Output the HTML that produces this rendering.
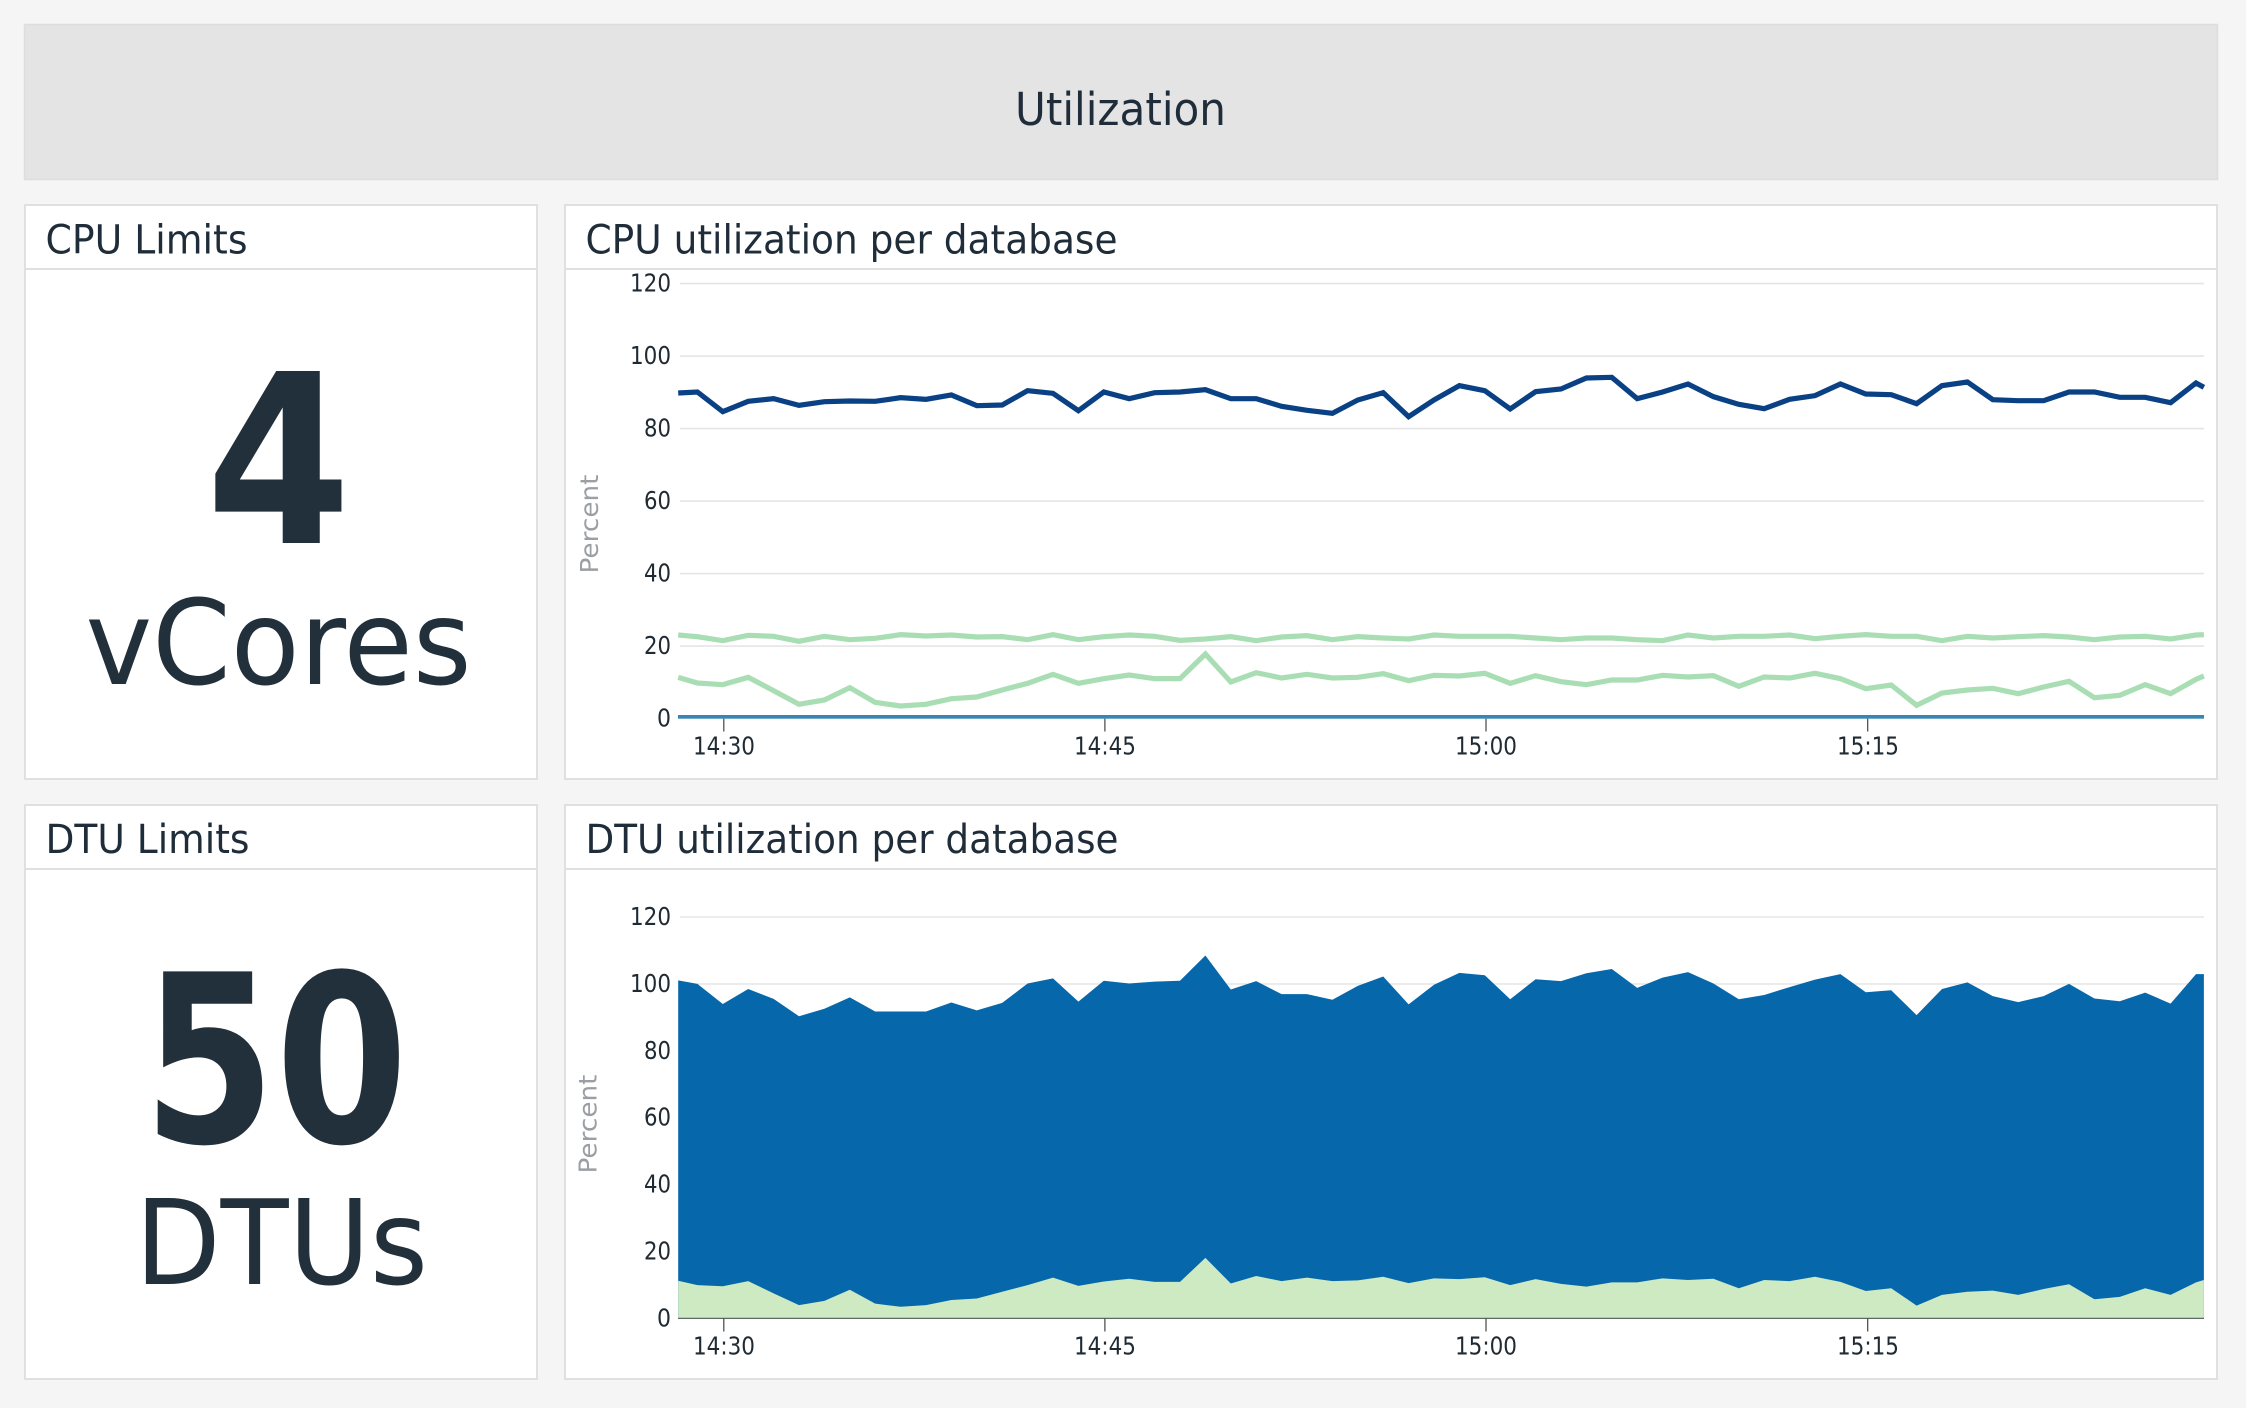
<!DOCTYPE html>
<html lang="en"><head><meta charset="utf-8"><title>Utilization</title>
<style>
html,body{margin:0;padding:0;background:#f5f5f5;width:2246px;height:1408px;overflow:hidden}
svg{display:block}
text{font-family:"DejaVu Sans","Liberation Sans",sans-serif;fill:#1f2d3a}
.t{font-size:40px}
.a{font-size:24.5px;fill:#1f2a33;text-anchor:end}
.x{font-size:24.5px;fill:#1f2a33;text-anchor:middle}
.p{font-size:25px;fill:#9b9fa3;text-anchor:middle}
.big{fill:#22303b}
.card{fill:#fff;stroke:#e0e0e0;stroke-width:2}
.div{stroke:#e0e0e0;stroke-width:2}
.g{stroke:#e5e5e5;stroke-width:1.6}
.tick{stroke:#444;stroke-width:1.2}
polyline{fill:none;vector-effect:non-scaling-stroke;stroke-linejoin:miter}
</style></head><body>
<svg width="2246" height="1408" viewBox="0 0 2246 1408" xmlns="http://www.w3.org/2000/svg">
<rect width="2246" height="1408" fill="#f5f5f5"/>
<rect x="24.5" y="24.5" width="2193" height="155" fill="#e4e4e4" stroke="#dedede" stroke-width="1.5"/>
<text x="1015" y="125" font-size="45" textLength="211" lengthAdjust="spacingAndGlyphs">Utilization</text>

<rect class="card" x="25" y="205" width="512" height="574"/>
<rect class="card" x="565" y="205" width="1652" height="574"/>
<rect class="card" x="25" y="805" width="512" height="574"/>
<rect class="card" x="565" y="805" width="1652" height="574"/>
<line class="div" x1="25" x2="537" y1="269" y2="269"/>
<line class="div" x1="565" x2="2217" y1="269" y2="269"/>
<line class="div" x1="25" x2="537" y1="869" y2="869"/>
<line class="div" x1="565" x2="2217" y1="869" y2="869"/>

<text class="t" x="45.5" y="253.5" textLength="202" lengthAdjust="spacingAndGlyphs">CPU Limits</text>
<text class="t" x="585.5" y="253.5" textLength="532" lengthAdjust="spacingAndGlyphs">CPU utilization per database</text>
<text class="t" x="45.5" y="853" textLength="204" lengthAdjust="spacingAndGlyphs">DTU Limits</text>
<text class="t" x="585.5" y="853" textLength="533" lengthAdjust="spacingAndGlyphs">DTU utilization per database</text>

<text class="big" x="206" y="543" font-size="236" font-weight="700" textLength="145" lengthAdjust="spacingAndGlyphs">4</text>
<text class="big" x="85.5" y="684" font-size="118" textLength="386" lengthAdjust="spacingAndGlyphs">vCores</text>
<text class="big" x="143" y="1142" font-size="234" font-weight="700" textLength="265" lengthAdjust="spacingAndGlyphs">50</text>
<text class="big" x="135" y="1284" font-size="118" textLength="293" lengthAdjust="spacingAndGlyphs">DTUs</text>

<!-- CPU chart -->
<g>
<line class="g" x1="680" x2="2204" y1="283.6" y2="283.6"/>
<line class="g" x1="680" x2="2204" y1="356.1" y2="356.1"/>
<line class="g" x1="680" x2="2204" y1="428.6" y2="428.6"/>
<line class="g" x1="680" x2="2204" y1="501.1" y2="501.1"/>
<line class="g" x1="680" x2="2204" y1="573.6" y2="573.6"/>
<line class="g" x1="680" x2="2204" y1="646.1" y2="646.1"/>
</g>
<g transform="matrix(25.4,0,0,0.33333,722.8,260)">
<polyline stroke="#0a4185" stroke-width="5.2" points="-1.756,399 -1,396 0,455 1,424 2,416 3,436 4,425 5,423 6,424 7,413 8,418 9,405 10,437 11,435 12,392 13,400 14,452 15,396 16,416 17,398 18,396 19,389 20,416 21,416 22,439 23,451 24,460 25,420 26,398 27,470 28,420 29,377 30,392 31,447 32,395 33,387 34,354 35,352 36,416 37,396 38,372 39,410 40,433 41,446 42,418 43,407 44,372 45,402 46,404 47,431 48,377 49,366 50,419 51,422 52,422 53,396 54,396 55,412 56,412 57,428 58,369 58.31,382"/>
<polyline stroke="#a9deb4" stroke-width="5.2" points="-1.756,1125 -1,1130 0,1142 1,1126 2,1129 3,1144 4,1129 5,1139 6,1135 7,1124 8,1128 9,1125 10,1131 11,1130 12,1139 13,1124 14,1139 15,1130 16,1125 17,1129 18,1141 19,1137 20,1130 21,1142 22,1131 23,1127 24,1139 25,1130 26,1134 27,1137 28,1125 29,1129 30,1129 31,1129 32,1134 33,1139 34,1134 35,1134 36,1139 37,1142 38,1125 39,1134 40,1129 41,1129 42,1125 43,1136 44,1129 45,1124 46,1129 47,1129 48,1142 49,1129 50,1134 51,1130 52,1127 53,1131 54,1139 55,1131 56,1129 57,1137 58,1125 58.31,1124"/>
<polyline stroke="#a9deb4" stroke-width="5.2" points="-1.756,1252 -1,1269 0,1274 1,1252 2,1292 3,1333 4,1320 5,1283 6,1327 7,1338 8,1333 9,1316 10,1311 11,1290 12,1270 13,1243 14,1270 15,1256 16,1245 17,1256 18,1256 19,1182 20,1266 21,1238 22,1254 23,1243 24,1254 25,1252 26,1241 27,1262 28,1246 29,1248 30,1240 31,1270 32,1247 33,1265 34,1274 35,1260 36,1260 37,1246 38,1251 39,1247 40,1279 41,1251 42,1254 43,1240 44,1256 45,1286 46,1275 47,1336 48,1299 49,1290 50,1285 51,1301 52,1281 53,1264 54,1313 55,1306 56,1274 57,1301 58,1258 58.31,1248"/>
</g>
<rect x="678" y="715" width="1526" height="3.7" fill="#3a86b3"/>
<g>
<line class="tick" x1="723.8" x2="723.8" y1="718.7" y2="731.5"/>
<line class="tick" x1="1104.9" x2="1104.9" y1="718.7" y2="731.5"/>
<line class="tick" x1="1486" x2="1486" y1="718.7" y2="731.5"/>
<line class="tick" x1="1867.7" x2="1867.7" y1="718.7" y2="731.5"/>
</g>
<g>
<text class="a" x="671" y="291.5" textLength="41" lengthAdjust="spacingAndGlyphs">120</text>
<text class="a" x="671" y="364" textLength="41" lengthAdjust="spacingAndGlyphs">100</text>
<text class="a" x="671" y="436.5" textLength="27" lengthAdjust="spacingAndGlyphs">80</text>
<text class="a" x="671" y="509" textLength="27" lengthAdjust="spacingAndGlyphs">60</text>
<text class="a" x="671" y="581.5" textLength="27" lengthAdjust="spacingAndGlyphs">40</text>
<text class="a" x="671" y="654" textLength="27" lengthAdjust="spacingAndGlyphs">20</text>
<text class="a" x="671" y="726.5" textLength="14" lengthAdjust="spacingAndGlyphs">0</text>
<text class="x" x="724" y="754.5" textLength="62" lengthAdjust="spacingAndGlyphs">14:30</text>
<text class="x" x="1105" y="754.5" textLength="62" lengthAdjust="spacingAndGlyphs">14:45</text>
<text class="x" x="1486" y="754.5" textLength="62" lengthAdjust="spacingAndGlyphs">15:00</text>
<text class="x" x="1868" y="754.5" textLength="62" lengthAdjust="spacingAndGlyphs">15:15</text>
<text class="p" transform="translate(598,524) rotate(-90)" textLength="99" lengthAdjust="spacingAndGlyphs">Percent</text>
</g>

<!-- DTU chart -->
<g>
<line class="g" x1="680" x2="2204" y1="917" y2="917"/>
<line class="g" x1="680" x2="2204" y1="984" y2="984"/>
<line class="g" x1="680" x2="2204" y1="1050.8" y2="1050.8"/>
<line class="g" x1="680" x2="2204" y1="1117.6" y2="1117.6"/>
<line class="g" x1="680" x2="2204" y1="1184.5" y2="1184.5"/>
<line class="g" x1="680" x2="2204" y1="1251.3" y2="1251.3"/>
</g>
<g transform="matrix(25.4,0,0,0.39417,722.8,790)">
<polygon fill="#0667ab" points="-1.756,483 -1,492 0,543 1,505 2,530 3,574 4,555 5,526 6,562 7,562 8,562 9,539 10,559 11,540 12,491 13,478 14,537 15,484 16,491 17,486 18,484 19,420 20,506 21,485 22,518 23,518 24,532 25,497 26,473 27,544 28,494 29,464 30,470 31,531 32,480 33,485 34,465 35,454 36,502 37,476 38,462 39,491 40,531 41,520 42,500 43,481 44,467 45,513 46,508 47,571 48,505 49,488 50,523 51,538 52,523 53,492 54,529 55,536 56,514 57,542 58,467 58.31,467 58.31,1340 -1.756,1340"/>
<polygon fill="#cdeac3" points="-1.756,1245 -1,1256 0,1259 1,1246 2,1277 3,1307 4,1296 5,1268 6,1303 7,1311 8,1307 9,1294 10,1290 11,1273 12,1256 13,1237 14,1258 15,1247 16,1240 17,1248 18,1248 19,1187 20,1252 21,1233 22,1246 23,1237 24,1246 25,1244 26,1235 27,1251 28,1239 29,1241 30,1236 31,1256 32,1241 33,1253 34,1260 35,1249 36,1249 37,1239 38,1243 39,1240 40,1264 41,1243 42,1246 43,1235 44,1248 45,1271 46,1264 47,1308 48,1281 49,1273 50,1270 51,1281 52,1266 53,1254 54,1292 55,1286 56,1264 57,1281 58,1249 58.31,1243 58.31,1340 -1.756,1340"/>
</g>
<line x1="678" x2="2204" y1="1318.4" y2="1318.4" stroke="#5d6a66" stroke-width="1.2"/>
<g>
<line class="tick" x1="723.8" x2="723.8" y1="1318.4" y2="1331.5"/>
<line class="tick" x1="1104.9" x2="1104.9" y1="1318.4" y2="1331.5"/>
<line class="tick" x1="1486" x2="1486" y1="1318.4" y2="1331.5"/>
<line class="tick" x1="1867.7" x2="1867.7" y1="1318.4" y2="1331.5"/>
</g>
<g>
<text class="a" x="671" y="925" textLength="41" lengthAdjust="spacingAndGlyphs">120</text>
<text class="a" x="671" y="992" textLength="41" lengthAdjust="spacingAndGlyphs">100</text>
<text class="a" x="671" y="1058.8" textLength="27" lengthAdjust="spacingAndGlyphs">80</text>
<text class="a" x="671" y="1125.6" textLength="27" lengthAdjust="spacingAndGlyphs">60</text>
<text class="a" x="671" y="1192.5" textLength="27" lengthAdjust="spacingAndGlyphs">40</text>
<text class="a" x="671" y="1259.3" textLength="27" lengthAdjust="spacingAndGlyphs">20</text>
<text class="a" x="671" y="1326.5" textLength="14" lengthAdjust="spacingAndGlyphs">0</text>
<text class="x" x="724" y="1354.5" textLength="62" lengthAdjust="spacingAndGlyphs">14:30</text>
<text class="x" x="1105" y="1354.5" textLength="62" lengthAdjust="spacingAndGlyphs">14:45</text>
<text class="x" x="1486" y="1354.5" textLength="62" lengthAdjust="spacingAndGlyphs">15:00</text>
<text class="x" x="1868" y="1354.5" textLength="62" lengthAdjust="spacingAndGlyphs">15:15</text>
<text class="p" transform="translate(596.5,1124) rotate(-90)" textLength="99" lengthAdjust="spacingAndGlyphs">Percent</text>
</g>
</svg>
</body></html>
